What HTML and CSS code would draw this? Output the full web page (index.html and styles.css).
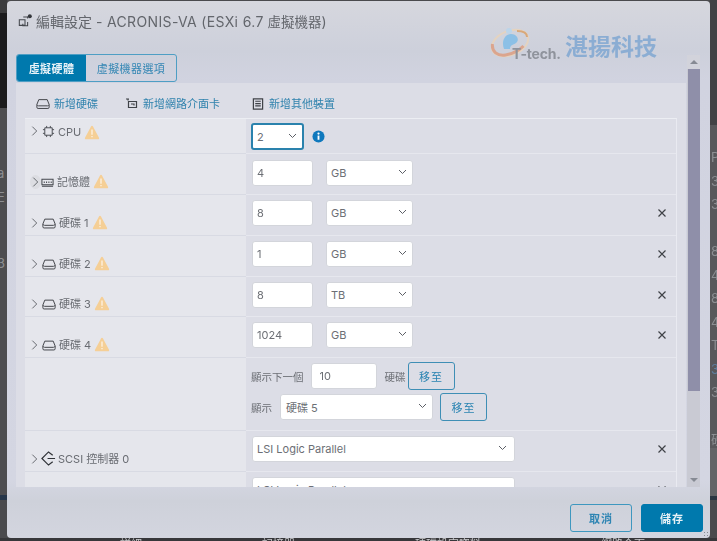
FILE: index.html
```html
<!DOCTYPE html>
<html lang="zh-Hant">
<head>
<meta charset="utf-8">
<title>編輯設定</title>
<link rel="stylesheet" href="styles.css">
</head>
<body>
<svg class="defs" width="0" height="0" aria-hidden="true">
  <symbol id="disk" viewBox="0 0 16 13"><path d="M3.2 1.5h9.6L15 7v3.2a1.4 1.4 0 0 1-1.4 1.4H2.4A1.4 1.4 0 0 1 1 10.2V7z M1.2 7.4c.6 1 1 1.2 1.8 1.2h10c.8 0 1.2-.2 1.8-1.2" fill="none" stroke="#3f4247" stroke-width="1.1"/></symbol>
  <symbol id="warn" viewBox="0 0 16 15"><path d="M8 .8c.5 0 .8.2 1 .7l6 11.200c.4.8 0 1.500-.9 1.500H1.900c-.9 0-1.300-.7-.9-1.500L7 1.500c.2-.5.5-.7 1-.7z" fill="#f5cf96"/><path d="M8 4.500v5.200M8 11v1.300" stroke="#fdf3e2" stroke-width="1.300"/></symbol>
  <symbol id="chev" viewBox="0 0 8 12"><path d="M1.500 1l5 5-5 5" fill="none" stroke="#55585e" stroke-width="1"/></symbol>
  <symbol id="down" viewBox="0 0 9 6"><path d="M1 1l3.500 3.500L8 1" fill="none" stroke="#5c5f66" stroke-width="1"/></symbol>
  <symbol id="close" viewBox="0 0 10 10"><path d="M1.500 1.500l7 7M8.500 1.500l-7 7" fill="none" stroke="#3f4247" stroke-width="1.200"/></symbol>
</svg>
<div class="screen">
  <div class="strip strip-left">
    <span class="frag frag-a">a</span>
    <span class="frag frag-e">E</span>
    <span class="frag frag-3">3</span>
  </div>
  <section class="modal">
    <header class="modal-head">
      <svg class="head-icon" viewBox="0 0 16 16" width="14" height="14"><path d="M6 3.500h5v1.500M11 9v4.500H5.500V11M1.500 6.500h6.500v6.500H1.500z" fill="none" stroke="#44474d" stroke-width="1.200"/><circle cx="13.500" cy="2.500" r="2.300" fill="#33363b"/></svg>
      <h1 class="modal-title">編輯設定 <span class="latin">- ACRONIS-VA (ESXi 6.7</span> <span class="title-cjk">虛擬機器</span>)</h1>
      <div class="logo">
        <svg class="logo-mark" viewBox="0 0 42 34" width="42" height="34">
          <ellipse cx="20" cy="17" rx="19" ry="12" transform="rotate(-22 20 17)" fill="none" stroke="#e4d3c0" stroke-width="2"/>
          <path d="M2.500 18c-1 8 5 12 13 11 7-1 13-4 18-9" fill="none" stroke="#dba58e" stroke-width="3"/>
          <path d="M27 5c6 0 10 2 10 6" fill="none" stroke="#d9a879" stroke-width="2"/>
          <circle cx="19" cy="5" r="3" fill="#bcd5ea"/>
          <path d="M14 23c-3-8 1-15 7-15 6 0 9 6 5 9-3 2-6 2-6 6z" fill="#8cc0e6"/>
        </svg>
        <span class="logo-en">T-tech.</span>
        <span class="logo-zh">湛揚科技</span>
      </div>
    </header>
    <div class="modal-main">
      <div class="left-col">
        <nav class="tabs">
          <span class="tab tab-active">虛擬硬體</span>
          <span class="tab">虛擬機器選項</span>
        </nav>
        <div class="panel">
          <div class="toolbar">
            <span class="tool tool-disk"><svg class="tool-icon"><use href="#disk"/></svg>新增硬碟</span>
            <span class="tool"><svg class="tool-icon" viewBox="0 0 14 12"><path d="M3.500 3.500h8v6h-8zM1 1h3M3 1v1.500M6 6h3v1.500" fill="none" stroke="#3f4247" stroke-width="1.200"/></svg>新增網路介面卡</span>
            <span class="tool"><svg class="tool-icon" viewBox="0 0 13 13"><path d="M1.500 1h10v11h-10zM3.500 3.500h6M3.500 6h6M3.500 8.500h6" fill="none" stroke="#3f4247" stroke-width="1.300"/></svg>新增其他裝置</span>
          </div>
          <div class="table">
            <div class="row row-cpu">
              <div class="label label-mid">
                <svg class="chev"><use href="#chev"/></svg>
                <svg class="dev-icon" viewBox="0 0 14 14"><path d="M3 3h8v8H3zM5 1v2M9 1v2M5 11v2M9 11v2M1 5h2M1 9h2M11 5h2M11 9h2" fill="none" stroke="#44474d" stroke-width="1"/></svg>
                <span class="label-text">CPU</span>
                <svg class="warn"><use href="#warn"/></svg>
              </div>
              <div class="value">
                <div class="select select-cpu">2<svg class="down"><use href="#down"/></svg></div>
                <svg class="info" viewBox="0 0 14 14" width="13" height="13"><circle cx="7" cy="7" r="6.500" fill="#0f78bd"/><path d="M7 6v4.500" stroke="#fff" stroke-width="2"/><circle cx="7" cy="3.800" r="1.200" fill="#fff"/></svg>
              </div>
            </div>
            <div class="row row-first">
              <div class="label">
                <span class="chev-wrap"><svg class="chev"><use href="#chev"/></svg></span>
                <svg class="dev-icon" viewBox="0 0 14 12"><path d="M1 2.500h12v6H1zM3.500 5v1.500M6 5v1.500M8.500 5v1.500M11 5v1.500M1 10h12" fill="none" stroke="#44474d" stroke-width="1.100"/></svg>
                <span class="label-text">記憶體</span>
                <svg class="warn"><use href="#warn"/></svg>
              </div>
              <div class="value">
                <input class="field" value="4" aria-label="記憶體">
                <div class="select select-unit">GB<svg class="down"><use href="#down"/></svg></div>
              </div>
            </div>
            <div class="row">
              <div class="label"><svg class="chev"><use href="#chev"/></svg><svg class="dev-icon disk-icon"><use href="#disk"/></svg><span class="label-text">硬碟 1</span><svg class="warn"><use href="#warn"/></svg></div>
              <div class="value"><input class="field" value="8" aria-label="硬碟 1"><div class="select select-unit">GB<svg class="down"><use href="#down"/></svg></div><svg class="close"><use href="#close"/></svg></div>
            </div>
            <div class="row">
              <div class="label"><svg class="chev"><use href="#chev"/></svg><svg class="dev-icon disk-icon"><use href="#disk"/></svg><span class="label-text">硬碟 2</span><svg class="warn"><use href="#warn"/></svg></div>
              <div class="value"><input class="field" value="1" aria-label="硬碟 2"><div class="select select-unit">GB<svg class="down"><use href="#down"/></svg></div><svg class="close"><use href="#close"/></svg></div>
            </div>
            <div class="row">
              <div class="label"><svg class="chev"><use href="#chev"/></svg><svg class="dev-icon disk-icon"><use href="#disk"/></svg><span class="label-text">硬碟 3</span><svg class="warn"><use href="#warn"/></svg></div>
              <div class="value"><input class="field" value="8" aria-label="硬碟 3"><div class="select select-unit">TB<svg class="down"><use href="#down"/></svg></div><svg class="close"><use href="#close"/></svg></div>
            </div>
            <div class="row">
              <div class="label"><svg class="chev"><use href="#chev"/></svg><svg class="dev-icon disk-icon"><use href="#disk"/></svg><span class="label-text">硬碟 4</span><svg class="warn"><use href="#warn"/></svg></div>
              <div class="value"><input class="field" value="1024" aria-label="硬碟 4"><div class="select select-unit">GB<svg class="down"><use href="#down"/></svg></div><svg class="close"><use href="#close"/></svg></div>
            </div>
            <div class="row row-pager">
              <div class="label"></div>
              <div class="value value-stack">
                <div class="pager-line">
                  <span class="pager-text">顯示下一個</span>
                  <input class="field field-count" value="10" aria-label="顯示下一個">
                  <span class="pager-text pager-unit">硬碟</span>
                  <button class="goto goto-first">移至</button>
                </div>
                <div class="pager-line">
                  <span class="pager-text">顯示</span>
                  <div class="select select-disk">硬碟 5<svg class="down"><use href="#down"/></svg></div>
                  <button class="goto">移至</button>
                </div>
              </div>
            </div>
            <div class="row">
              <div class="label">
                <svg class="chev"><use href="#chev"/></svg>
                <svg class="dev-icon scsi-icon" viewBox="0 0 16 16"><path d="M12.500 4.500L8 1 1 8l7 7 4.500-3.500M7 8h8" fill="none" stroke="#2f3237" stroke-width="1.300"/></svg>
                <span class="label-text">SCSI 控制器 0</span>
              </div>
              <div class="value"><div class="select select-wide">LSI Logic Parallel<svg class="down"><use href="#down"/></svg></div><svg class="close"><use href="#close"/></svg></div>
            </div>
            <div class="row">
              <div class="label"></div>
              <div class="value"><div class="select select-wide">LSI Logic Parallel<svg class="down"><use href="#down"/></svg></div><svg class="close"><use href="#close"/></svg></div>
            </div>
          </div>
        </div>
      </div>
      <div class="scrollbar">
        <span class="scroll-btn"><i class="arrow-up"></i></span>
        <span class="scroll-thumb"></span>
        <span class="scroll-rest"><i class="arrow-down"></i></span>
      </div>
    </div>
    <footer class="modal-foot">
      <button class="btn btn-outline">取消</button>
      <button class="btn btn-primary">儲存</button>
      <span class="resize"></span>
    </footer>
  </section>
  <div class="strip strip-right">
    <span>P</span><span>3</span><span>3</span><span>&nbsp;</span><span>8</span><span>4</span><span>8</span><span>4</span><span>T</span><span class="frag-blue">3</span><span>3</span><span>&nbsp;</span><span>硬</span>
  </div>
</div>
<div class="under">
  <span>詳細</span><span>記憶器</span><span>硬碟設定資料</span><span>網路介面</span>
</div>
</body>
</html>
```
FILE: styles.css
```css
* { box-sizing: border-box; }
html, body { margin: 0; height: 100%; }
body {
  width: 717px;
  height: 541px;
  overflow: hidden;
  background: #4a4a4d;
  font-family: Inter, "Noto Sans CJK TC", "Noto Sans", sans-serif;
  color: #666a70;
  filter: blur(0.35px);
}
.defs { display: block; height: 0; }
.screen { display: flex; height: 538px; }

.strip { width: 7px; flex: none; overflow: hidden; font-size: 13px; color: #8d8f93; }
.strip-left {
  display: flex;
  flex-direction: column;
  background: linear-gradient(#3b3b3d 0 13px, #1b1b1d 13px 108px, #4d4d50 108px 495px, #26364a 495px 500px, #4a4a4d 500px);
}
.frag { display: block; height: 0; line-height: 20px; text-indent: -3px; white-space: nowrap; }
.frag-a { margin-top: 163px; }
.frag-e { margin-top: 24px; }
.frag-3 { margin-top: 66px; }
.strip-right {
  display: flex;
  flex-direction: column;
  padding-top: 146px;
  background: linear-gradient(#424245 0 125px, #58585b 125px 448px, #636366 448px 496px, #2b3541 496px 500px, #4a4a4d 500px);
}
.strip-right span { display: block; height: 23.5px; line-height: 23.5px; text-indent: 1px; white-space: nowrap; }
.strip-right .frag-blue { color: #5f7f9f; }

.modal {
  position: relative;
  flex: none;
  width: 703px;
  height: 537px;
  margin-top: 1px;
  border-radius: 4px;
  overflow: hidden;
  display: flex;
  flex-direction: column;
  background: linear-gradient(#d6d7de, #cdd0db 50px, #d1d3e0 80px, #d4d6e2 480px, #ced1da 500px, #d3d5df);
}

.modal-head { flex: none; height: 53px; display: flex; align-items: flex-start; padding: 12px 0 0 11px; }
.head-icon { flex: none; margin-top: 1px; }
.modal-title { margin: 0 0 0 4px; font-size: 14px; line-height: 17px; font-weight: 400; color: #63666c; white-space: nowrap; }
.latin { letter-spacing: .35px; }
.title-cjk { font-size: 13.5px; }

.logo { position: absolute; left: 483px; top: 25px; display: flex; align-items: flex-end; }
.logo-mark { flex: none; }
.logo-en { margin: 0 0 -2px -20px; width: 53px; font-size: 14px; line-height: 17px; font-weight: 700; letter-spacing: -.2px; color: #8f939c; position: relative; }
.logo-zh { font-size: 23px; line-height: 26px; font-weight: 700; color: #8badd3; white-space: nowrap; }

.modal-main { flex: none; height: 433px; display: flex; padding-left: 9px; }
.left-col { width: 670px; flex: none; display: flex; flex-direction: column; }

.tabs { flex: none; display: flex; width: 161px; height: 28px; border: 1px solid #4e9ec4; border-radius: 3px; overflow: hidden; }
.tab { display: flex; flex: 1; align-items: center; justify-content: center; font-size: 11px; letter-spacing: .4px; color: #3487b4; white-space: nowrap; }
.tab-active { flex: none; width: 69px; background: #0079ad; color: #e9f3f8; font-weight: 700; }

.panel { flex: none; height: 404px; margin-top: 1px; overflow: hidden; background: #dcdde6; padding-left: 9px; }
.toolbar { height: 35px; display: flex; align-items: flex-end; padding: 0 0 7px 11px; }
.tool { display: flex; align-items: center; font-size: 11px; line-height: 14px; color: #2f82ad; white-space: nowrap; margin-right: 31px; }
.tool-disk { margin-right: 27px; }
.tool-icon { flex: none; width: 14px; height: 12px; margin-right: 4px; }

.table { width: 652px; border-top: 1px solid #eceef3; border-right: 1px solid #e9eaf1; }
.row { display: grid; grid-template-columns: 221px 1fr; height: 40.75px; }
.row-cpu { height: 35px; }
.row-first { height: 41px; }
.row-pager { height: 73.250px; }
.label { display: flex; align-items: flex-end; padding: 0 0 5px 6px; background: #e5e6ec; border-bottom: 1px solid #d8dae3; }
.label-mid { align-items: flex-start; padding-top: 6px; }
.value { display: flex; align-items: flex-start; padding: 5px 9px 0 6px; border-bottom: 1px solid #e6e7ee; }
.row-first .value { padding-top: 6px; }
.row-cpu .value { padding-top: 4px; }

.chev { flex: none; width: 7px; height: 12px; margin: 0 4px 1px 0; }
.chev-wrap { width: 11px; height: 14px; margin-left: -1px; display: flex; align-items: center; justify-content: center; border-radius: 50%; background: #dcdde2; }
.chev-wrap .chev { margin: 0; }
.dev-icon { flex: none; width: 13px; height: 13px; margin: 0 3px 0 0; }
.disk-icon { width: 14px; height: 13px; margin-right: 3px; }
.scsi-icon { width: 15px; height: 15px; margin-right: 2px; margin-left: -1px; }
.label-text { font-size: 11px; line-height: 14px; color: #696c72; white-space: nowrap; }
.warn { flex: none; width: 16px; height: 15px; margin-left: 3px; }

.field, .select {
  height: 26px;
  border: 1px solid #d3d5db;
  border-radius: 3px;
  background: #fff;
  font: inherit;
  font-size: 11px;
  color: #6c6f75;
  padding: 0 4px;
}
.field { width: 61px; flex: none; outline: 0; }
.select { position: relative; display: flex; align-items: center; flex: none; }
.down { position: absolute; right: 5px; top: 8px; width: 9px; height: 6px; }
.select-unit { width: 87px; margin-left: 13px; }
.select-cpu { width: 53px; height: 27px; margin-left: -1px; border: 2px solid #2a82ad; }
.select-disk { width: 153px; margin-left: 8px; padding-left: 5px; }
.select-wide { width: 263px; }
.select-wide .down { right: 7px; }
.info { flex: none; margin: 7px 0 0 8px; }
.close { width: 10px; height: 10px; margin: 8px 0 0 auto; flex: none; }

.value-stack { display: flex; flex-direction: column; align-items: flex-start; justify-content: flex-start; padding-top: 4px; padding-left: 5px; }
.pager-line { display: flex; align-items: center; height: 28px; margin-bottom: 3px; }
.pager-text { font-size: 10.500px; color: #6c6f75; white-space: nowrap; }
.pager-unit { margin-left: 8px; }
.field-count { width: 66px; margin-left: 7px; padding-left: 8px; }
.goto { height: 28px; width: 47px; margin-left: 7px; padding: 0; background: transparent; border: 1px solid #3e8eb5; border-radius: 3px; font: inherit; font-size: 11px; letter-spacing: 1px; color: #2a84b2; }
.goto-first { margin-left: 2px; }

.scrollbar { flex: none; width: 13px; margin: 1px 0 0 1px; display: flex; flex-direction: column; background: #c9cad3; }
.scroll-btn { height: 14px; flex: none; display: flex; align-items: center; justify-content: center; background: #d2d3db; }
.scroll-thumb { flex: none; height: 322px; margin-left: 1px; background: #8f8fa9; }
.scroll-rest { flex: 1; display: flex; align-items: flex-end; justify-content: center; padding-bottom: 5px; }
.arrow-up { border: 4px solid transparent; border-top: 0; border-bottom: 4px solid #868a93; }
.arrow-down { border: 4px solid transparent; border-bottom: 0; border-top: 4px solid #868a93; }

.modal-foot { flex: 1; display: flex; justify-content: flex-end; align-items: flex-start; gap: 9px; padding: 17px 7px 0 0; }
.btn { width: 62px; height: 28px; padding: 0; border-radius: 3px; font: inherit; font-size: 11px; font-weight: 700; letter-spacing: 1px; }
.btn-outline { background: transparent; border: 1px solid #3e97bf; color: #2f85b3; }
.btn-primary { background: #0079ad; border: 1px solid #0079ad; color: #e6f1f6; }
.resize { position: absolute; right: 1px; bottom: 1px; width: 6px; height: 6px; background-image: radial-gradient(#888b92 0.7px, transparent 1px); background-size: 3px 3px; }

.under { height: 3px; overflow: hidden; display: flex; gap: 120px; padding-left: 120px; background: #37373a; font-size: 11px; line-height: 13px; color: #c9c9cc; }
```
